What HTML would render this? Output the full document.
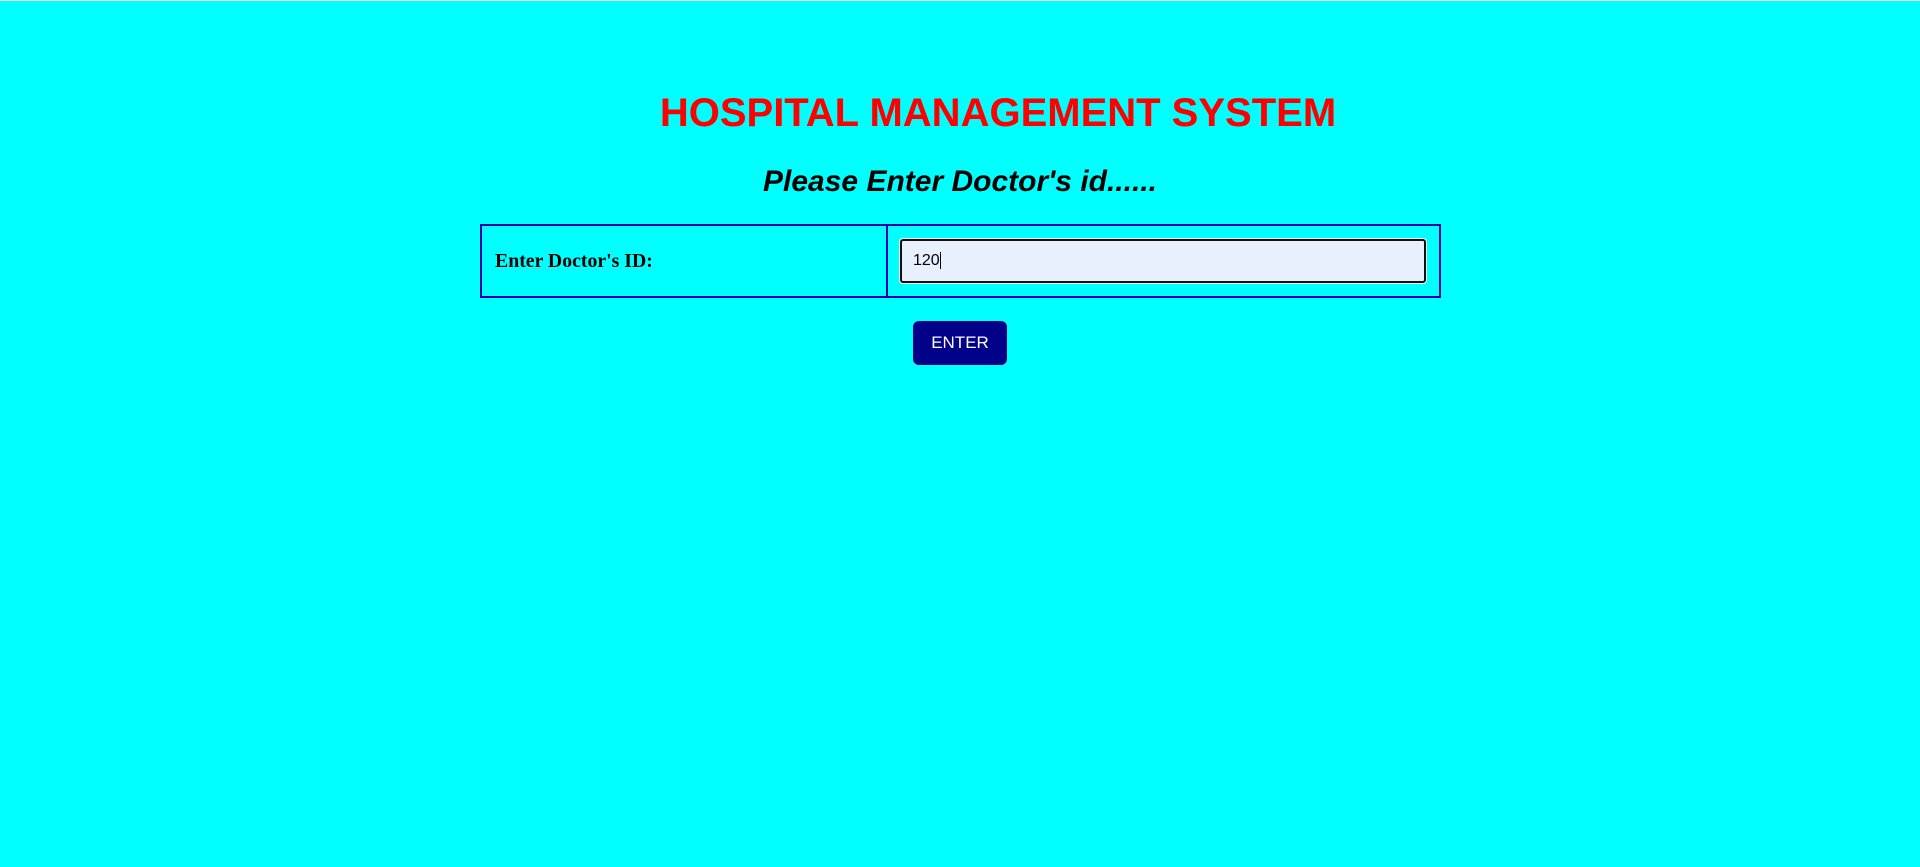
<!DOCTYPE html>
<html><head><meta charset="utf-8"><style>
html,body{margin:0;padding:0;}
body{width:1920px;height:866px;background:#00ffff;border-top:1px solid #fff;position:relative;overflow:hidden;font-family:"Liberation Sans",Arial,sans-serif;}
.t{position:absolute;left:0;width:1996px;text-align:center;top:87px;margin:0;font-size:40px;font-weight:bold;color:#f00;line-height:50px;}
.h{position:absolute;left:0;width:1920px;text-align:center;top:162px;margin:0;font-size:30px;font-weight:bold;font-style:italic;color:#000;line-height:38px;}
.tb{position:absolute;left:480px;top:223px;width:957px;height:70px;border:2px solid #1a00b0;}
.div{position:absolute;left:404px;top:0;width:2px;height:70px;background:#1a00b0;}
.lab{position:absolute;left:13px;top:0;line-height:70px;font-family:"Liberation Serif",serif;font-weight:bold;font-size:19.8px;color:#000;}
.in{position:absolute;left:418px;top:13px;width:526px;height:44px;box-sizing:border-box;background:#e8f0fe;border:2px solid #111;border-radius:3px;box-shadow:0 0 0 1px #fff;font-size:16px;line-height:40px;padding-left:11px;color:#000;}
.in span{border-right:1px solid #000;}
.btn{position:absolute;left:913px;top:320px;width:94px;height:44px;background:#000088;border-radius:6px;color:#fff;font-size:17px;text-align:center;line-height:44px;}
</style></head><body>
<h1 class="t">HOSPITAL MANAGEMENT SYSTEM</h1>
<h2 class="h">Please Enter Doctor's id......</h2>
<div class="tb"><div class="lab">Enter Doctor's ID:</div><div class="div"></div><div class="in"><span>120</span></div></div>
<div class="btn">ENTER</div>
</body></html>
